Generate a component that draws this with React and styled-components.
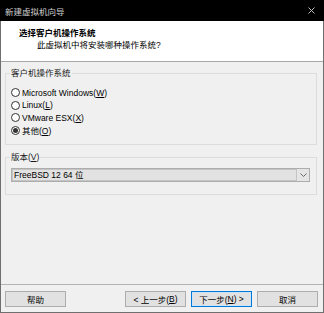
import styled, { createGlobalStyle, css } from "styled-components"

const GlobalStyle = createGlobalStyle`
  html, body {
    margin: 0;
    padding: 0;
    background: #fff;
  }
  body {
    font-family: "Liberation Sans", "Noto Sans CJK SC", sans-serif;
    font-size: 8.5px;
    color: #000;
  }
`

const Window = styled.div`
  width: 324px;
  height: 313px;
  display: flex;
  flex-direction: column;
`

const TitleBar = styled.div`
  height: 21px;
  flex: none;
  display: flex;
  align-items: center;
  justify-content: space-between;
  padding: 0 9px 0 5px;
  background: #000;
  color: #cfcfcf;
`

const Frame = styled.div`
  flex: 1;
  display: flex;
  flex-direction: column;
  min-height: 0;
  background: #f0f0f0;
  border: 1px solid #6f6f6f;
  border-top: none;
`

const Header = styled.div`
  height: 41px;
  flex: none;
  padding-top: 6px;
  box-sizing: border-box;
  background: #fff;
  border-bottom: 1px solid #a8a8a8;
`

const HeaderTitle = styled.div`
  padding-left: 18px;
  line-height: 12px;
  font-weight: 700;
`

const HeaderSub = styled.div`
  padding-left: 36px;
  line-height: 12px;
`

const Body = styled.div`
  flex: 1;
  display: flex;
  flex-direction: column;
  gap: 6px;
  padding: 5px 6px 0 4px;
`

const Group = styled.fieldset`
  margin: 0;
  padding: ${(p) => p.$pad};
  border: 1px solid #dcdcdc;
  min-width: 0;
`

const Legend = styled.legend`
  padding: 0 1px;
  line-height: 12px;
  color: #1a1a1a;
`

const Key = styled.span`
  text-decoration: underline;
  text-underline-offset: 1px;
`

const RadioRow = styled.div`
  height: 12.5px;
  display: flex;
  align-items: center;
  gap: 2px;
  padding-left: 1px;
`

const RadioDot = styled.span`
  width: 9px;
  height: 9px;
  box-sizing: border-box;
  border-radius: 50%;
  border: 1px solid #333;
  background: #fff;
  display: flex;
  align-items: center;
  justify-content: center;

  ${(p) =>
    p.$checked &&
    css`
      &::after {
        content: "";
        width: 5px;
        height: 5px;
        border-radius: 50%;
        background: #333;
      }
    `}
`

const Select = styled.div`
  margin-left: 1px;
  height: 14px;
  box-sizing: border-box;
  display: flex;
  border: 1px solid #adadad;
  background: #e5e5e5;
`

const SelectField = styled.div`
  flex: 1;
  border: 1px solid #c4c4c4;
  background: #e2e2e2;
  line-height: 10px;
  padding-left: 1px;
`

const SelectArrow = styled.div`
  width: 12px;
  display: flex;
  align-items: center;
  justify-content: center;
`

const Footer = styled.div`
  flex: none;
  display: flex;
  justify-content: space-between;
  padding: 6px 5px 5px 4px;
  border-top: 1px solid #b4b4b4;
`

const ButtonGroup = styled.div`
  display: flex;
  gap: 5px;
`

const Button = styled.div`
  width: 61px;
  height: 16px;
  box-sizing: border-box;
  display: flex;
  align-items: center;
  justify-content: center;
  background: #e1e1e1;
  border: 1px solid ${(p) => (p.$primary ? "#0078d7" : "#adadad")};
  ${(p) =>
    p.$primary &&
    css`
      box-shadow: inset 0 0 0 1px #cce4f7;
    `}
`

const options = [
  { label: "Microsoft Windows(", key: "W" },
  { label: "Linux(", key: "L" },
  { label: "VMware ESX(", key: "X" },
  { label: "其他(", key: "O", checked: true },
]

function App() {
  return (
    <Window>
      <GlobalStyle />
      <TitleBar>
        <span>新建虚拟机向导</span>
        <svg width="7" height="7" viewBox="0 0 7 7">
          <path d="M0.5 0.5L6.5 6.5M6.5 0.5L0.5 6.5" stroke="#bdbdbd" strokeWidth="1" />
        </svg>
      </TitleBar>
      <Frame>
        <Header>
          <HeaderTitle>选择客户机操作系统</HeaderTitle>
          <HeaderSub>此虚拟机中将安装哪种操作系统?</HeaderSub>
        </Header>
        <Body>
          <Group $pad="7.5px 6px 7.5px 4px">
            <Legend>客户机操作系统</Legend>
            {options.map((o) => (
              <RadioRow key={o.key}>
                <RadioDot $checked={o.checked} />
                <span>
                  {o.label}
                  <Key>{o.key}</Key>)
                </span>
              </RadioRow>
            ))}
          </Group>
          <Group $pad="5px 6px 12px 4px">
            <Legend>
              版本(<Key>V</Key>)
            </Legend>
            <Select>
              <SelectField>FreeBSD 12 64 位</SelectField>
              <SelectArrow>
                <svg width="7" height="4" viewBox="0 0 7 4">
                  <path d="M0.5 0.5L3.5 3.5L6.5 0.5" fill="none" stroke="#6a6a6a" strokeWidth="1" />
                </svg>
              </SelectArrow>
            </Select>
          </Group>
        </Body>
        <Footer>
          <Button>帮助</Button>
          <ButtonGroup>
            <Button>
              &lt; 上一步(<Key>B</Key>)
            </Button>
            <Button $primary>
              下一步(<Key>N</Key>) &gt;
            </Button>
            <Button>取消</Button>
          </ButtonGroup>
        </Footer>
      </Frame>
    </Window>
  )
}

export default App
